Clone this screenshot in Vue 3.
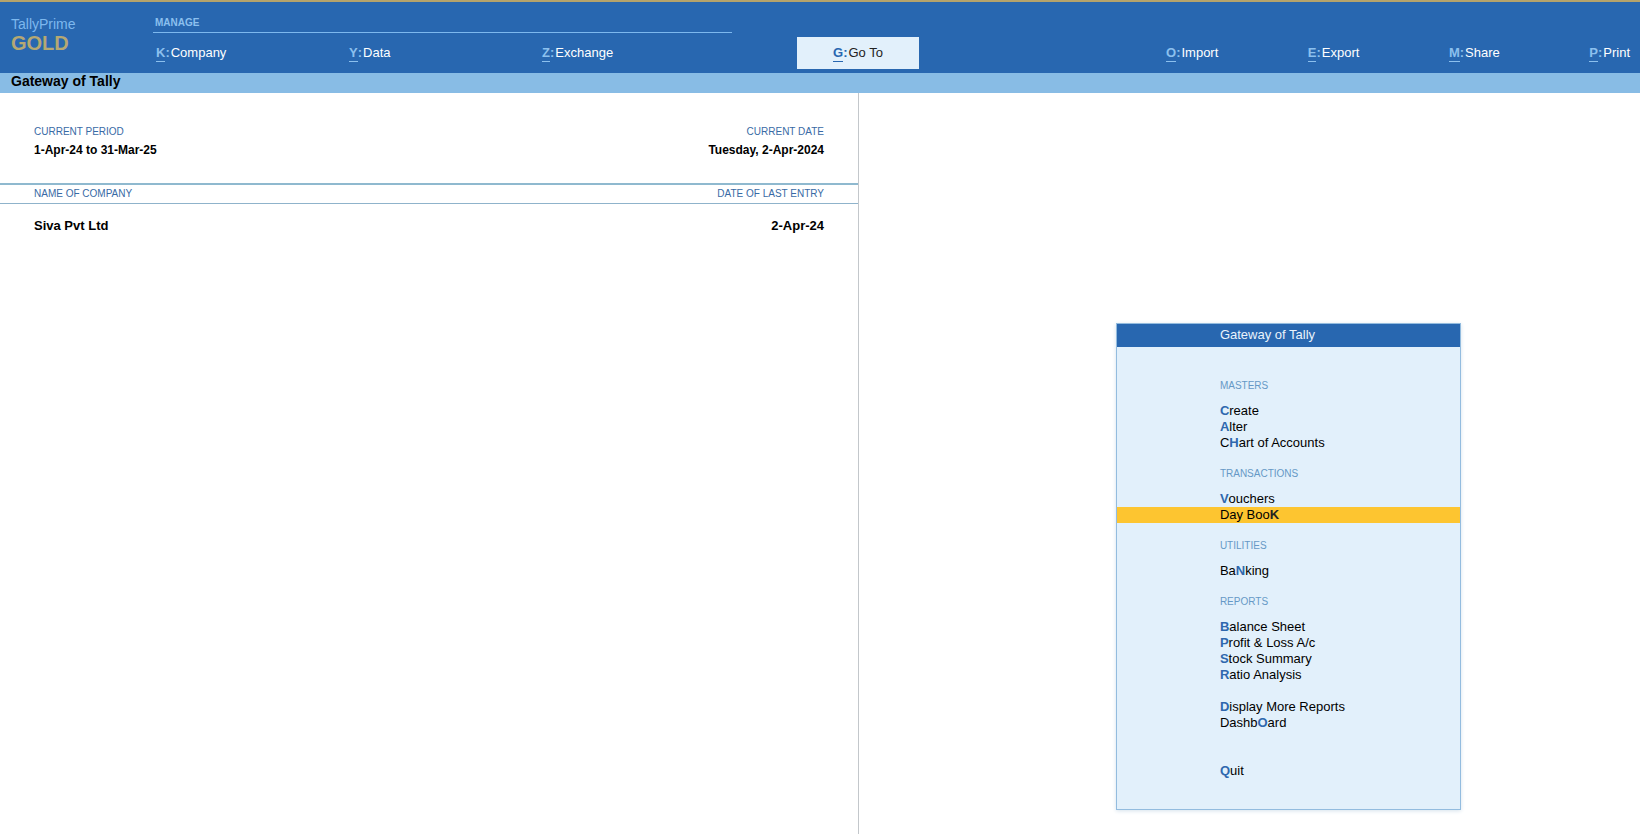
<script setup>
import { ref } from 'vue'

const manageActions = [
  { key: 'K', label: 'Company' },
  { key: 'Y', label: 'Data' },
  { key: 'Z', label: 'Exchange' }
]

const shareActions = [
  { key: 'O', label: 'Import' },
  { key: 'E', label: 'Export' },
  { key: 'M', label: 'Share' },
  { key: 'P', label: 'Print' }
]

const companies = [{ name: 'Siva Pvt Ltd', lastEntry: '2-Apr-24' }]

// Each item is [text before hotkey, hotkey, text after hotkey].
const sections = [
  { title: 'MASTERS', items: [['', 'C', 'reate'], ['', 'A', 'lter'], ['C', 'H', 'art of Accounts']] },
  { title: 'TRANSACTIONS', items: [['', 'V', 'ouchers'], ['Day Boo', 'K', '']] },
  { title: 'UTILITIES', items: [['Ba', 'N', 'king']] },
  {
    title: 'REPORTS',
    items: [['', 'B', 'alance Sheet'], ['', 'P', 'rofit & Loss A/c'], ['', 'S', 'tock Summary'], ['', 'R', 'atio Analysis']]
  },
  { gap: 'small', items: [['', 'D', 'isplay More Reports'], ['Dashb', 'O', 'ard']] },
  { gap: 'large', items: [['', 'Q', 'uit']] }
]

const selected = ref('Day BooK')
</script>

<template>
  <div class="app">
    <header class="topbar">
      <div class="brand">
        <span class="brand-name">TallyPrime</span>
        <strong class="brand-edition">GOLD</strong>
      </div>
      <nav class="manage" aria-label="Manage">
        <h2 class="manage-title">MANAGE</h2>
        <div class="manage-actions">
          <button v-for="a in manageActions" :key="a.key" type="button" class="action">
            <span class="hot">{{ a.key }}</span><b class="colon">:</b><span>{{ a.label }}</span>
          </button>
        </div>
      </nav>
      <button type="button" class="action goto">
        <span class="hot">G</span><b class="colon">:</b><span>Go To</span>
      </button>
      <nav class="share" aria-label="Share">
        <button v-for="a in shareActions" :key="a.key" type="button" class="action">
          <span class="hot">{{ a.key }}</span><b class="colon">:</b><span>{{ a.label }}</span>
        </button>
      </nav>
    </header>

    <h1 class="titlebar">Gateway of Tally</h1>

    <main class="workspace">
      <section class="info">
        <dl class="period">
          <div>
            <dt>CURRENT PERIOD</dt>
            <dd>1-Apr-24 to 31-Mar-25</dd>
          </div>
          <div class="right">
            <dt>CURRENT DATE</dt>
            <dd>Tuesday, 2-Apr-2024</dd>
          </div>
        </dl>
        <table class="companies">
          <thead>
            <tr>
              <th scope="col">NAME OF COMPANY</th>
              <th scope="col" class="right">DATE OF LAST ENTRY</th>
            </tr>
          </thead>
          <tbody>
            <tr v-for="c in companies" :key="c.name">
              <td>{{ c.name }}</td>
              <td class="right">{{ c.lastEntry }}</td>
            </tr>
          </tbody>
        </table>
      </section>

      <section class="gateway">
        <nav class="menu" aria-labelledby="menu-title">
          <h2 id="menu-title" class="menu-title">Gateway of Tally</h2>
          <div v-for="(s, i) in sections" :key="i" class="section" :class="s.gap">
            <h3 v-if="s.title" class="section-title">{{ s.title }}</h3>
            <button
              v-for="item in s.items"
              :key="item.join('')"
              type="button"
              class="item"
              :class="{ selected: selected === item.join('') }"
              @click="selected = item.join('')"
            >{{ item[0] }}<b>{{ item[1] }}</b>{{ item[2] }}</button>
          </div>
        </nav>
      </section>
    </main>
  </div>
</template>

<style>
body {
  margin: 0;
  background: #fff;
}
</style>

<style scoped>
.app {
  display: flex;
  flex-direction: column;
  min-height: 100vh;
  font-family: "Liberation Sans", Arial, sans-serif;
  font-size: 13px;
  line-height: 16px;
  color: #000;
}

h1, h2, h3, dl, dd {
  margin: 0;
}

button {
  border: 0;
  margin: 0;
  padding: 0;
  background: none;
  font: inherit;
  color: inherit;
  text-align: left;
  cursor: pointer;
}

.right {
  text-align: right;
}

.topbar {
  display: grid;
  grid-template-columns: 153fr 579fr 65fr 122fr 244fr 477fr;
  height: 71px;
  border-top: 2px solid #b5a36b;
  background: #2867b0;
  color: #fff;
}

.brand {
  display: flex;
  flex-direction: column;
  padding: 14px 0 0 11px;
}

.brand-name {
  font-size: 14px;
  line-height: 16px;
  color: #7db8ee;
}

.brand-edition {
  font-size: 20px;
  line-height: 22px;
  color: #b5a873;
}

.manage-title {
  padding: 12px 0 0 2px;
  border-bottom: 1px solid #7db8ee;
  font-size: 10px;
  line-height: 18px;
  color: #8cc0ee;
}

.manage-actions {
  display: grid;
  grid-template-columns: repeat(3, 1fr);
  padding-top: 12px;
}

.action {
  display: flex;
  align-items: flex-start;
  padding-left: 3px;
  white-space: nowrap;
}

.hot {
  border-bottom: 1px solid currentColor;
  font-weight: bold;
  color: #8cc0ee;
}

.colon {
  margin-right: 1px;
  color: #8cc0ee;
}

.goto {
  grid-column: 4;
  justify-content: center;
  height: 32px;
  margin-top: 35px;
  padding: 8px 0 0;
  background: #e2f0fb;
  color: #222;
}

.goto .hot,
.goto .colon {
  color: #2867b0;
}

.share {
  grid-column: 6;
  display: flex;
  justify-content: space-between;
  align-items: flex-start;
  padding: 43px 10px 0 0;
}

.titlebar {
  height: 20px;
  padding-left: 11px;
  background: #88bce5;
  font-size: 14px;
  line-height: 16px;
}

.workspace {
  flex: 1;
  display: grid;
  grid-template-columns: 859fr 781fr;
}

.info {
  border-right: 1px solid #c3c7cb;
}

.period {
  display: flex;
  justify-content: space-between;
  padding: 31px 34px 23px;
}

dt,
th {
  font-size: 10px;
  font-weight: normal;
  color: #386aa5;
}

dd {
  font-size: 12px;
  font-weight: bold;
  line-height: 20px;
}

.companies {
  width: 100%;
  border-spacing: 0;
}

th {
  padding: 0 34px;
  border-top: 2px solid #8fb9cf;
  border-bottom: 1px solid #8fb3cb;
  line-height: 18px;
  text-align: left;
}

th.right {
  text-align: right;
}

td {
  padding: 14px 34px;
  font-weight: bold;
}

.gateway {
  display: grid;
  grid-template-columns: 257fr 345fr 179fr;
  align-items: end;
  padding-bottom: 24px;
}

.menu {
  grid-column: 2;
  padding-bottom: 30px;
  border: 1px solid #93bcdf;
  background: #e2f0fb;
  box-shadow: 0 1px 4px #d5e2ec;
}

.menu-title {
  margin-bottom: 16px;
  padding: 0 0 1px 30%;
  background: #2867b0;
  font-size: 13px;
  font-weight: normal;
  line-height: 22px;
  color: #e9f3fc;
}

.section-title {
  padding: 15px 0 9px 30%;
  font-size: 10px;
  font-weight: normal;
  line-height: 16px;
  color: #6699c6;
}

.small {
  padding-top: 16px;
}

.large {
  padding-top: 32px;
}

.item {
  display: block;
  width: 100%;
  padding-left: 30%;
}

.item b {
  color: #2f68ae;
}

.selected {
  background: #fdc530;
}

.selected b {
  color: #222;
}
</style>
